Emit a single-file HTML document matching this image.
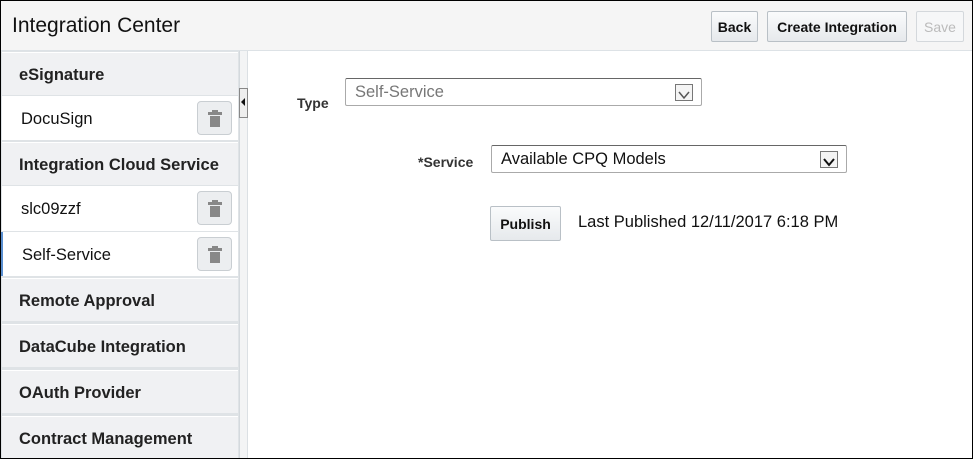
<!DOCTYPE html>
<html><head><style>
*{box-sizing:border-box;margin:0;padding:0}
body{width:973px;height:459px;position:relative;overflow:hidden;background:#fff;font-family:"Liberation Sans",Arial,sans-serif;color:#222}
.frame{position:absolute;left:0;top:0;width:973px;height:459px;border:1px solid #000;z-index:10;pointer-events:none}
.hdr{position:absolute;left:0;top:0;width:973px;height:51px;background:#f5f5f5;border-bottom:1px solid #dde2e6}
.title{position:absolute;left:12px;top:14px;font-size:21px;color:#111}
.btn{position:absolute;top:11px;height:31px;border:1px solid #b9c0c6;border-radius:2px;background:linear-gradient(#fafbfc,#e6e9ec);font-weight:bold;font-size:14px;line-height:30px;text-align:center;color:#111}
.side{position:absolute;left:0;top:51px;width:240px;height:408px;background:#dfe3e6;border-right:1px solid #d4d9dd}
.gap{position:absolute;left:240px;top:51px;width:8px;height:408px;background:#f3f4f5;border-right:1px solid #dbe0e4}
.sh{position:absolute;left:2px;width:236px;background:#f0f1f3;border-top:1px solid #fff;font-weight:bold;font-size:16.5px;padding-left:17px;padding-top:2px;color:#222}
.si{position:absolute;left:2px;width:236px;background:#fff;font-size:16.5px;padding-left:19px;padding-top:2px;color:#111}
.trash{position:absolute;right:6px;top:5px;width:35px;height:34px;border:1px solid #c9ced2;border-radius:4px;background:#eceef0}
.trash svg{position:absolute;left:10px;top:8px}
.lbl{position:absolute;font-weight:bold;font-size:14px;color:#333}
.sel{position:absolute;height:28px;border:1px solid #aaa;border-top-color:#666;border-radius:2px;background:#fff;font-size:16.5px;padding-left:9px;line-height:27px}
.dd{position:absolute;right:8px;top:5px;width:18px;height:17px;border:1px solid #777;background:#f4f4f4}
</style></head><body>
<div class="hdr"><div class="title">Integration Center</div>
<div class="btn" style="left:711px;width:47px">Back</div>
<div class="btn" style="left:767px;width:140px">Create Integration</div>
<div class="btn" style="left:916px;width:48px;color:#bbb;border-color:#d4d8dc;background:#f6f7f8;font-weight:normal">Save</div>
</div>
<div class="side">
<div class="sh" style="top:1px;height:43px;line-height:41px">eSignature</div>
<div class="si" style="top:45px;height:44px;line-height:42px">DocuSign<div class="trash"><svg width="14" height="17"><rect x="0" y="2" width="14" height="3" fill="#888"/><rect x="4" y="0" width="6" height="3" fill="#888"/><rect x="2" y="6" width="10" height="11" fill="#888"/></svg></div></div>
<div class="sh" style="top:91px;height:43px;line-height:41px">Integration Cloud Service</div>
<div class="si" style="top:135px;height:45px;line-height:43px">slc09zzf<div class="trash"><svg width="14" height="17"><rect x="0" y="2" width="14" height="3" fill="#888"/><rect x="4" y="0" width="6" height="3" fill="#888"/><rect x="2" y="6" width="10" height="11" fill="#888"/></svg></div></div>
<div class="si" style="top:181px;height:44px;line-height:42px;border-left:3px solid #5a8fd0;left:0;width:238px">Self-Service<div class="trash"><svg width="14" height="17"><rect x="0" y="2" width="14" height="3" fill="#888"/><rect x="4" y="0" width="6" height="3" fill="#888"/><rect x="2" y="6" width="10" height="11" fill="#888"/></svg></div></div>
<div class="sh" style="top:227px;height:43px;line-height:41px">Remote Approval</div>
<div class="sh" style="top:273px;height:43px;line-height:41px">DataCube Integration</div>
<div class="sh" style="top:319px;height:43px;line-height:41px">OAuth Provider</div>
<div class="sh" style="top:365px;height:43px;line-height:41px">Contract Management</div>
</div>
<div class="gap"></div>
<div style="position:absolute;left:239px;top:88px;width:9px;height:30px;border:1px solid #888;background:#eee"><div style="position:absolute;left:1px;top:9px;border:4px solid transparent;border-right:4px solid #111;border-left:0"></div></div>
<div class="lbl" style="left:297px;top:95px">Type</div>
<div class="sel" style="left:345px;top:78px;width:357px;color:#777">Self-Service<div class="dd"><svg width="16" height="15"><path d="M3 4 L8 10 L13 4" fill="none" stroke="#555" stroke-width="1.5"/></svg></div></div>
<div class="lbl" style="left:418px;top:154px">*Service</div>
<div class="sel" style="left:491px;top:145px;width:356px;color:#111">Available CPQ Models<div class="dd"><svg width="16" height="15"><path d="M3 4 L8 10 L13 4" fill="none" stroke="#111" stroke-width="2"/></svg></div></div>
<div class="btn" style="left:490px;top:206px;width:71px;height:35px;line-height:34px;font-size:14px">Publish</div>
<div style="position:absolute;left:578px;top:213px;font-size:16.5px;color:#111">Last Published 12/11/2017 6:18 PM</div>
<div class="frame"></div>
</body></html>
